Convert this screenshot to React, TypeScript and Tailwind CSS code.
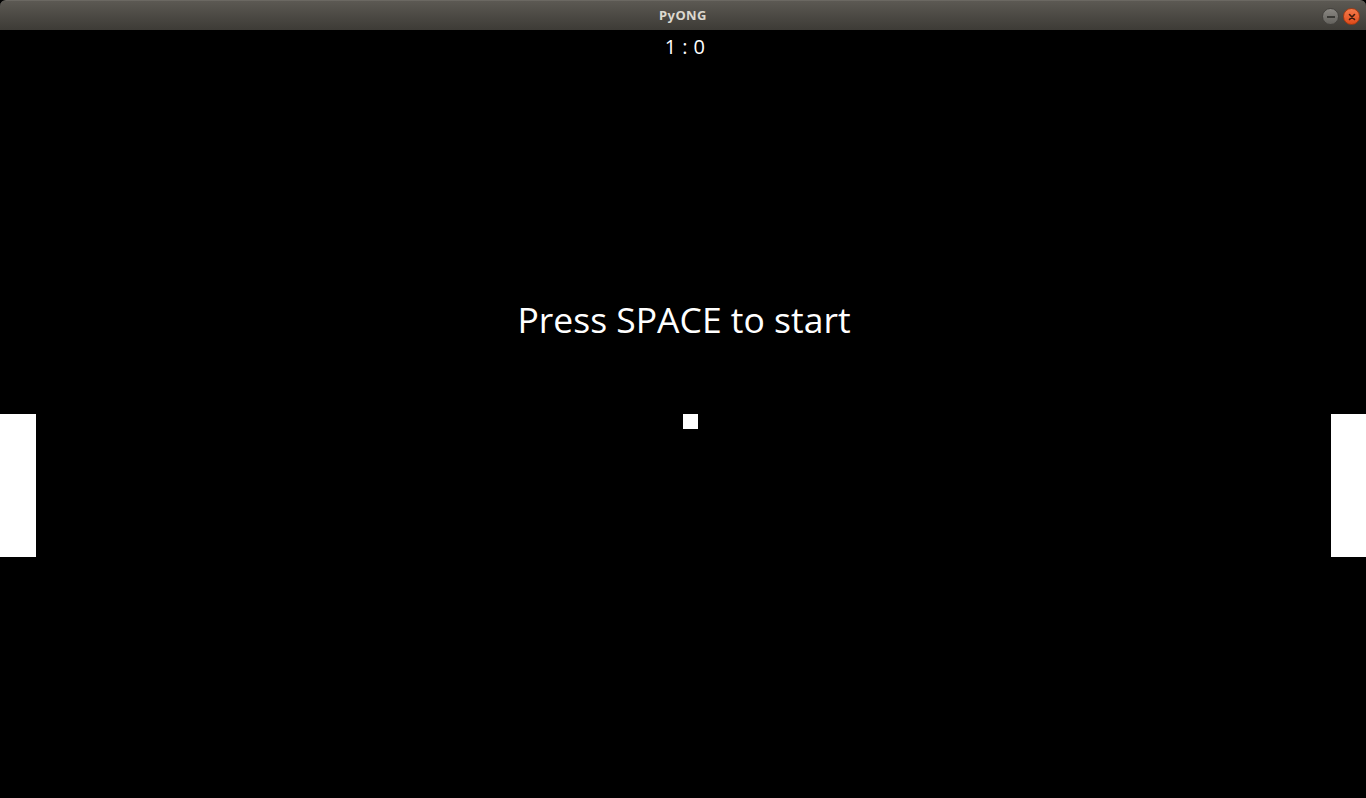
import React from "react";

export default function App() {
  return (
    <div className="w-[1366px] h-[798px] flex flex-col bg-black overflow-hidden">
      <div className="relative h-[30px] shrink-0 flex items-center justify-center bg-gradient-to-b from-[#5c5953] to-[#3d3b36] border-t border-[#6b6862] rounded-t-[6px]">
        <span className="text-[13px] font-bold text-[#dcd8cf] tracking-[0.4px]" style={{ fontFamily: '"Noto Sans", "DejaVu Sans", sans-serif' }}>
          PyONG
        </span>
        <div className="absolute right-[6px] top-[7px] flex gap-[4px]">
          <div className="w-[17px] h-[17px] rounded-full bg-gradient-to-b from-[#8a8782] to-[#64625d] border border-[#44423e] flex items-center justify-center">
            <div className="w-[8px] h-[2px] bg-[#3a3935]" />
          </div>
          <div className="w-[17px] h-[17px] rounded-full bg-gradient-to-b from-[#f47a4a] to-[#df4a18] border border-[#a53a12] flex items-center justify-center">
            <svg width="8" height="8" viewBox="0 0 8 8">
              <path d="M1.5 1.5 L6.5 6.5 M6.5 1.5 L1.5 6.5" stroke="#3b1a0c" strokeWidth="1.6" strokeLinecap="round" />
            </svg>
          </div>
        </div>
      </div>
      <div className="relative flex-1 bg-black text-white" style={{ fontFamily: '"Open Sans", "Noto Sans", sans-serif' }}>
        <div className="flex justify-center pt-[2px] pl-[4px]">
          <span className="text-[20px] leading-[30px] tracking-[0.4px]">1 : 0</span>
        </div>
        <div className="absolute left-0 right-0 top-[264px] flex justify-center pl-[2px]">
          <span className="text-[35.5px] leading-[50px]">Press SPACE to start</span>
        </div>
        <div className="absolute left-0 top-[384px] w-[36px] h-[143px] bg-white" />
        <div className="absolute right-0 top-[384px] w-[35px] h-[143px] bg-white" />
        <div className="absolute left-[683px] top-[384px] w-[15px] h-[15px] bg-white" />
      </div>
    </div>
  );
}
